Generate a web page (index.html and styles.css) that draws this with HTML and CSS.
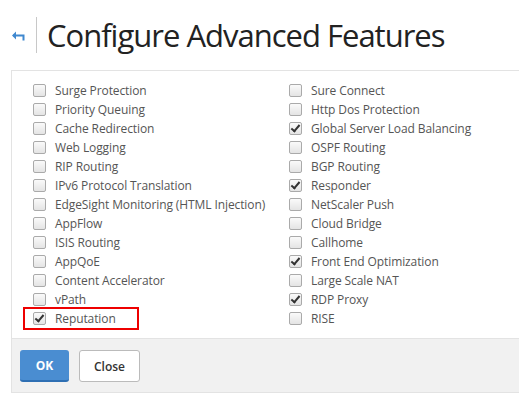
FILE: index.html
```html
<!DOCTYPE html>
<html lang="en">
<head>
    <meta charset="UTF-8">
    <title>Configure Advanced Features</title>
    <link rel="stylesheet" href="styles.css">
</head>
<body>
    <div class="header">
        <a class="back" href="#">
            <svg width="14" height="10" viewBox="0 0 14 10"><path d="M1 4.5h10.5v5" fill="none" stroke="#3f88cf" stroke-width="2"/><path d="M0 4.5l4-4v8z" fill="#3f88cf"/></svg>
        </a>
        <h1>Configure Advanced Features</h1>
    </div>
    <div class="panel">
        <div class="features">
            <div class="col">
                <label class="item"><span class="box"></span>Surge Protection</label>
                <label class="item"><span class="box"></span>Priority Queuing</label>
                <label class="item"><span class="box"></span>Cache Redirection</label>
                <label class="item"><span class="box"></span>Web Logging</label>
                <label class="item"><span class="box"></span>RIP Routing</label>
                <label class="item"><span class="box"></span>IPv6 Protocol Translation</label>
                <label class="item"><span class="box"></span>EdgeSight Monitoring (HTML Injection)</label>
                <label class="item"><span class="box"></span>AppFlow</label>
                <label class="item"><span class="box"></span>ISIS Routing</label>
                <label class="item"><span class="box"></span>AppQoE</label>
                <label class="item"><span class="box"></span>Content Accelerator</label>
                <label class="item"><span class="box"></span>vPath</label>
                <label class="item highlight"><span class="box checked"></span>Reputation</label>
            </div>
            <div class="col">
                <label class="item"><span class="box"></span>Sure Connect</label>
                <label class="item"><span class="box"></span>Http Dos Protection</label>
                <label class="item"><span class="box checked"></span>Global Server Load Balancing</label>
                <label class="item"><span class="box"></span>OSPF Routing</label>
                <label class="item"><span class="box"></span>BGP Routing</label>
                <label class="item"><span class="box checked"></span>Responder</label>
                <label class="item"><span class="box"></span>NetScaler Push</label>
                <label class="item"><span class="box"></span>Cloud Bridge</label>
                <label class="item"><span class="box"></span>Callhome</label>
                <label class="item"><span class="box checked"></span>Front End Optimization</label>
                <label class="item"><span class="box"></span>Large Scale NAT</label>
                <label class="item"><span class="box checked"></span>RDP Proxy</label>
                <label class="item"><span class="box"></span>RISE</label>
            </div>
        </div>
        <div class="footer">
            <button class="btn primary">OK</button>
            <button class="btn">Close</button>
        </div>
    </div>
</body>
</html>
```

FILE: styles.css
```css
body {
    margin: 0;
    font-family: "Open Sans", "Noto Sans", sans-serif;
    background-color: #fff;
    color: #333;
}
.header {
    display: flex;
    align-items: center;
    height: 70px;
    padding-left: 12px;
}
.back {
    display: flex;
    width: 14px;
    padding-right: 10px;
    margin-top: 1px;
}
h1 {
    margin: 0;
    padding-left: 10px;
    border-left: 1px solid #c8c8c8;
    font-size: 31px;
    font-weight: 400;
    letter-spacing: -1px;
    line-height: 36px;
    color: #222;
}
.panel {
    margin-left: 11px;
    width: 507px;
    border-top: 1px solid #e3e3e3;
    border-left: 1px solid #e3e3e3;
}
.features {
    display: grid;
    grid-template-columns: 256px 1fr;
    padding: 10px 0 10px 21px;
}
.item {
    display: flex;
    align-items: center;
    height: 19px;
    font-size: 12px;
    letter-spacing: -0.1px;
    color: #555;
}
.box {
    width: 11px;
    height: 11px;
    margin-right: 9px;
    border: 1px solid #aaa;
    border-radius: 2px;
    background: linear-gradient(#fafafa, #e4e4e4);
    position: relative;
}
.box.checked::after {
    content: "";
    position: absolute;
    left: 3px;
    top: 0;
    width: 3px;
    height: 7px;
    border: solid #333;
    border-width: 0 2px 2px 0;
    transform: rotate(40deg);
}
.highlight {
    box-sizing: border-box;
    width: 112px;
    margin-left: -8px;
    padding-left: 8px;
    outline: 2px solid #e00;
}
.footer {
    display: flex;
    gap: 10px;
    padding: 11px 8px 10px 8px;
    background-color: #f1f1f1;
    border-top: 1px solid #e3e3e3;
    border-bottom: 1px solid #e3e3e3;
}
.btn {
    height: 32px;
    padding: 0 14px;
    font-family: inherit;
    font-size: 12px;
    font-weight: 600;
    color: #333;
    background-color: #fff;
    border: 1px solid #bbb;
    border-radius: 3px;
}
.btn.primary {
    width: 49px;
    color: #fff;
    background-color: #4a8dd1;
    border: none;
    border-bottom: 2px solid #2e6fb3;
    font-weight: 700;
}
```
